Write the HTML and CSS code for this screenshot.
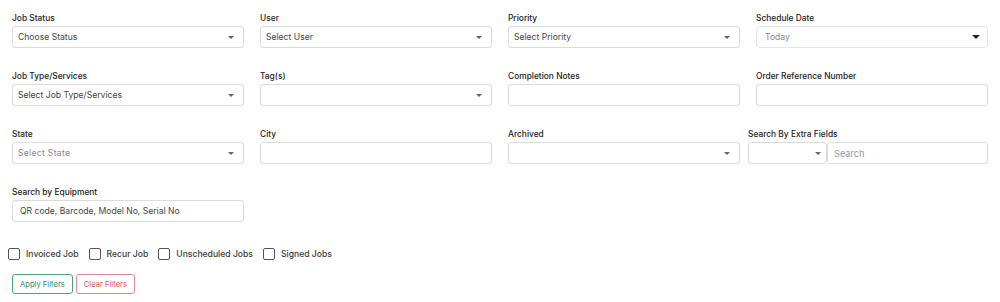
FILE: index.html
```html
<!DOCTYPE html>
<html lang="en">
<head>
  <meta charset="UTF-8">
  <meta name="viewport" content="width=device-width, initial-scale=1.0">
  <title>Job Filters</title>
  <link rel="stylesheet" href="styles.css">
</head>
<body>
  <form class="filters">
    <div class="grid">
      <!-- Row 1 -->
      <div class="field">
        <label>Job Status</label>
        <div class="select"><span class="value">Choose Status</span><span class="caret"></span></div>
      </div>
      <div class="field">
        <label>User</label>
        <div class="select"><span class="value">Select User</span><span class="caret"></span></div>
      </div>
      <div class="field">
        <label>Priority</label>
        <div class="select"><span class="value">Select Priority</span><span class="caret"></span></div>
      </div>
      <div class="field">
        <label>Schedule Date</label>
        <div class="select native"><span class="value muted">Today</span><span class="caret dark"></span></div>
      </div>

      <!-- Row 2 -->
      <div class="field">
        <label>Job Type/Services</label>
        <div class="select"><span class="value">Select Job Type/Services</span><span class="caret"></span></div>
      </div>
      <div class="field">
        <label>Tag(s)</label>
        <div class="select"><span class="value"></span><span class="caret"></span></div>
      </div>
      <div class="field">
        <label>Completion Notes</label>
        <input class="text" type="text">
      </div>
      <div class="field">
        <label>Order Reference Number</label>
        <input class="text" type="text">
      </div>

      <!-- Row 3 -->
      <div class="field">
        <label>State</label>
        <div class="select"><span class="value muted spaced">Select State</span><span class="caret"></span></div>
      </div>
      <div class="field">
        <label>City</label>
        <input class="text" type="text">
      </div>
      <div class="field">
        <label>Archived</label>
        <div class="select"><span class="value"></span><span class="caret"></span></div>
      </div>
      <div class="field extra">
        <label>Search By Extra Fields</label>
        <div class="extra-group">
          <div class="select small"><span class="value"></span><span class="caret"></span></div>
          <input class="text" type="text" placeholder="Search">
        </div>
      </div>

      <!-- Row 4 -->
      <div class="field">
        <label>Search by Equipment</label>
        <input class="text equip" type="text" placeholder="QR code, Barcode, Model No, Serial No">
      </div>
    </div>

    <div class="checks">
      <label class="check"><span class="box"></span>Invoiced Job</label>
      <label class="check"><span class="box"></span>Recur Job</label>
      <label class="check"><span class="box"></span>Unscheduled Jobs</label>
      <label class="check"><span class="box"></span>Signed Jobs</label>
    </div>

    <div class="actions">
      <button type="button" class="btn apply">Apply Filters</button>
      <button type="button" class="btn clear">Clear Filters</button>
    </div>
  </form>
</body>
</html>
```

FILE: styles.css
```css
/* Job filter panel */
body {
  margin: 0;
  background: #fff;
  font-family: 'Inter', 'Liberation Sans', sans-serif;
  color: #333;
}

.filters {
  padding: 12px 12px 0;
}

.grid {
  display: grid;
  grid-template-columns: repeat(4, 232px);
  column-gap: 16px;
  row-gap: 22px;
}

.field {
  display: flex;
  flex-direction: column;
}

.field label {
  font-size: 8.4px;
  font-weight: 500;
  line-height: 12px;
  height: 12px;
  margin-bottom: 2px;
  color: #222;
}

/* Fake select boxes */
.select {
  height: 22px;
  box-sizing: border-box;
  border: 1px solid #dcdcdc;
  border-radius: 3px;
  display: flex;
  align-items: center;
  justify-content: space-between;
  padding: 0 9px 0 5px;
  background: #fff;
}

.select .value {
  font-size: 8.6px;
  color: #444;
}

.select .value.muted {
  color: #888;
}

.select .value.spaced {
  letter-spacing: 0.3px;
}

.select.native {
  padding-left: 8px;
  border-color: #e6e6e6;
  border-radius: 4px;
}

.caret {
  width: 0;
  height: 0;
  border-left: 3px solid transparent;
  border-right: 3px solid transparent;
  border-top: 3px solid #666;
}

.caret.dark {
  border-left-width: 4px;
  border-right-width: 4px;
  border-top: 4px solid #222;
  margin-right: -2px;
}

.text {
  height: 22px;
  box-sizing: border-box;
  border: 1px solid #dcdcdc;
  border-radius: 3px;
  padding: 0 7px;
  font-family: inherit;
  font-size: 8.6px;
  color: #444;
  outline: none;
}

.text::placeholder {
  color: #999;
}

.text.equip::placeholder {
  color: #444;
}

/* Search by extra fields sits slightly left of its column */
.field.extra {
  margin-left: -8px;
}

.extra-group {
  display: flex;
}

.select.small {
  width: 79px;
  flex: none;
  padding-right: 5px;
}

.extra-group .text {
  flex: 1;
  min-width: 0;
  padding-left: 6px;
  font-size: 9.2px;
}

/* Checkboxes */
.checks {
  display: flex;
  gap: 10px;
  margin: 26px 0 0 -4px;
  height: 12px;
}

.check {
  display: flex;
  align-items: center;
  gap: 6px;
  font-size: 8.6px;
  font-weight: 500;
  color: #3a3a3a;
}

.box {
  width: 12px;
  height: 12px;
  box-sizing: border-box;
  border: 1.5px solid #555;
  border-radius: 2px;
}

/* Buttons */
.actions {
  display: flex;
  gap: 3px;
  margin-top: 14px;
}

.btn {
  height: 20px;
  padding: 0 7px;
  background: #fff;
  border-radius: 3px;
  font-family: inherit;
  font-size: 7.6px;
  cursor: pointer;
}

.btn.apply {
  border: 1px solid #4aa57a;
  color: #2e8b57;
}

.btn.clear {
  border: 1px solid #e58a94;
  color: #d9534f;
}
```
